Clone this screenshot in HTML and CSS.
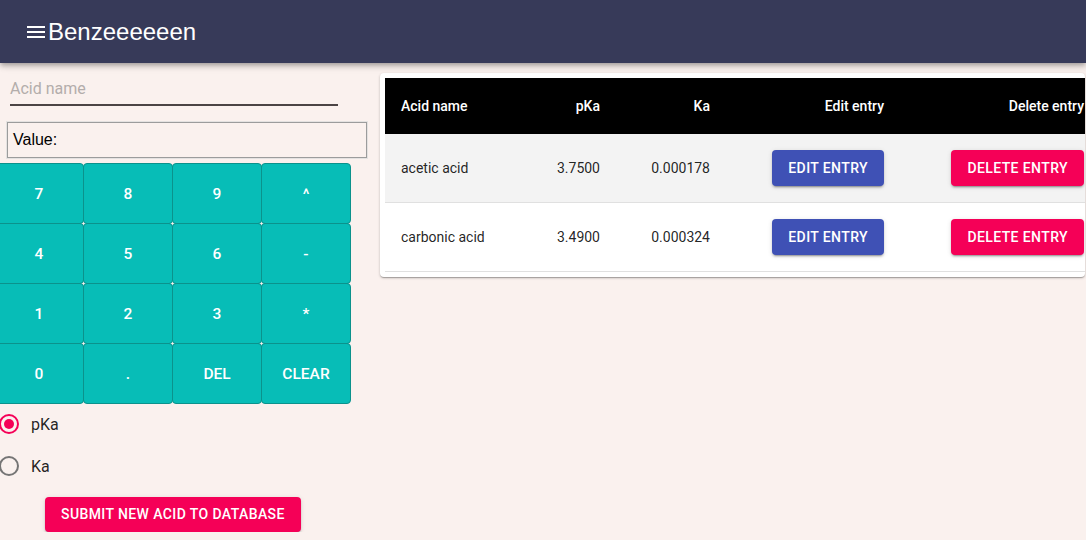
FILE: index.html
```html
<!DOCTYPE html>
<html lang="en">
<head>
<meta charset="utf-8">
<title>Benzeeeeeen</title>
<link rel="stylesheet" href="styles.css">
</head>
<body>
<header class="appbar">
  <svg class="menu-icon" width="18" height="14" viewBox="0 0 18 14" aria-hidden="true">
    <rect x="0" y="1" width="18" height="2" fill="#fff"/>
    <rect x="0" y="6" width="18" height="2" fill="#fff"/>
    <rect x="0" y="11" width="18" height="2" fill="#fff"/>
  </svg>
  <h1 class="title">Benzeeeeeen</h1>
</header>
<main class="main">
  <section class="left">
    <div class="name-field"><span class="placeholder">Acid name</span></div>
    <div class="value-box">Value:</div>
    <div class="keypad">
      <button class="key">7</button><button class="key">8</button><button class="key">9</button><button class="key">^</button>
      <button class="key">4</button><button class="key">5</button><button class="key">6</button><button class="key">-</button>
      <button class="key">1</button><button class="key">2</button><button class="key">3</button><button class="key">*</button>
      <button class="key">0</button><button class="key">.</button><button class="key">DEL</button><button class="key">CLEAR</button>
    </div>
    <div class="radios">
      <label class="radio">
        <svg class="radio-icon" width="24" height="24" viewBox="0 0 24 24" aria-hidden="true">
          <circle cx="12" cy="12" r="9" fill="none" stroke="#f50057" stroke-width="2"/>
          <circle cx="12" cy="12" r="5" fill="#f50057"/>
        </svg>
        <span class="radio-label">pKa</span>
      </label>
      <label class="radio">
        <svg class="radio-icon" width="24" height="24" viewBox="0 0 24 24" aria-hidden="true">
          <circle cx="12" cy="12" r="9" fill="none" stroke="#757575" stroke-width="2"/>
        </svg>
        <span class="radio-label">Ka</span>
      </label>
    </div>
    <button class="btn btn-pink submit">Submit new acid to database</button>
  </section>
  <section class="card">
    <table class="table">
      <colgroup>
        <col class="c1"><col class="c2"><col class="c3"><col class="c4"><col class="c5">
      </colgroup>
      <thead>
        <tr>
          <th class="left-cell">Acid name</th>
          <th>pKa</th>
          <th>Ka</th>
          <th>Edit entry</th>
          <th>Delete entry</th>
        </tr>
      </thead>
      <tbody>
        <tr class="shaded">
          <td class="left-cell">acetic acid</td>
          <td>3.7500</td>
          <td>0.000178</td>
          <td><button class="btn btn-blue">Edit entry</button></td>
          <td><button class="btn btn-pink">Delete entry</button></td>
        </tr>
        <tr>
          <td class="left-cell">carbonic acid</td>
          <td>3.4900</td>
          <td>0.000324</td>
          <td><button class="btn btn-blue">Edit entry</button></td>
          <td><button class="btn btn-pink">Delete entry</button></td>
        </tr>
      </tbody>
    </table>
  </section>
</main>
</body>
</html>
```

FILE: styles.css
```css
html, body {
  margin: 0;
  padding: 0;
  background: #faf1ee;
  overflow: hidden;
  font-family: Roboto, "Liberation Sans", Arial, sans-serif;
}

.appbar {
  height: 63px;
  background: #373a59;
  display: flex;
  align-items: center;
  padding-left: 27px;
  box-shadow: 0 2px 4px -1px rgba(0,0,0,.2), 0 4px 5px 0 rgba(0,0,0,.14), 0 1px 10px 0 rgba(0,0,0,.12);
  position: relative;
  z-index: 2;
}

.menu-icon {
  display: block;
}

.title {
  margin: 0 0 0 3px;
  font-family: "Liberation Sans", Arial, sans-serif;
  font-weight: 400;
  font-size: 24px;
  color: #fff;
  line-height: 1;
}

.main {
  display: flex;
  align-items: flex-start;
}

.left {
  width: 352px;
  flex: none;
  padding-top: 10px;
}

.name-field {
  margin-left: 10px;
  width: 328px;
  padding: 6px 0 6px;
  border-bottom: 2px solid #4b4444;
  height: 19px;
  font-size: 16px;
  line-height: 19px;
}

.placeholder {
  color: #b3adab;
}

.value-box {
  margin: 16px 0 0 7px;
  width: 353px;
  height: 34px;
  border: 1px solid #9c9c9c;
  outline: 1px solid #e4e2e1;
  font-family: "Liberation Sans", Arial, sans-serif;
  font-size: 16px;
  line-height: 34px;
  padding-left: 5px;
  color: #000;
}

.keypad {
  margin: 5px 0 0 -6px;
  display: grid;
  grid-template-columns: repeat(4, 89px);
  grid-auto-rows: 60px;
}

.key {
  margin: 0 -1px -1px 0;
  background: #07bdb7;
  border: 1px solid #0b928c;
  border-radius: 4px;
  color: #fff;
  font-family: Roboto, sans-serif;
  font-weight: 500;
  font-size: 15.5px;
  padding: 0;
  cursor: pointer;
}

.radios {
  display: flex;
  flex-direction: column;
}

.radio {
  display: flex;
  align-items: center;
  height: 42px;
}

.radio-icon {
  margin-left: -3px;
  display: block;
}

.radio-label {
  margin-left: 10px;
  font-size: 16px;
  color: rgba(0,0,0,.87);
}

.btn {
  border: 0;
  border-radius: 4px;
  color: #fff;
  font-family: Roboto, sans-serif;
  font-weight: 500;
  font-size: 14px;
  letter-spacing: 0.4px;
  text-transform: uppercase;
  padding: 0 16px;
  height: 36px;
  line-height: 36px;
  box-shadow: 0 3px 1px -2px rgba(0,0,0,.2), 0 2px 2px 0 rgba(0,0,0,.14), 0 1px 5px 0 rgba(0,0,0,.12);
  cursor: pointer;
  white-space: nowrap;
}

.btn-pink { background: #f50057; }
.btn-blue { background: #3f51b5; }

.submit {
  margin: 10px 0 0 45px;
  height: 35px;
  line-height: 35px;
}

.card {
  margin: 10px 0 0 28px;
  width: 705px;
  flex: none;
  background: #fff;
  border-radius: 4px;
  padding: 5px 0 5px 5px;
  box-sizing: border-box;
  overflow: hidden;
  box-shadow: 0 1px 3px 0 rgba(0,0,0,.2), 0 1px 1px 0 rgba(0,0,0,.14), 0 2px 1px -1px rgba(0,0,0,.12);
}

.table {
  border-collapse: collapse;
  table-layout: fixed;
  width: 715px;
  font-size: 14px;
}

.c1 { width: 145px; }
.c2 { width: 86px; }
.c3 { width: 110px; }
.c4 { width: 174px; }
.c5 { width: 200px; }

.table th, .table td {
  padding: 0 16px;
  text-align: right;
  white-space: nowrap;
}

.table th {
  background: #000;
  color: #fff;
  font-weight: 500;
  height: 56px;
}

.table td {
  height: 68px;
  color: rgba(0,0,0,.87);
  border-bottom: 1px solid #e0e0e0;
}

.table .left-cell { text-align: left; }

.shaded td { background: #f3f3f3; }
```
